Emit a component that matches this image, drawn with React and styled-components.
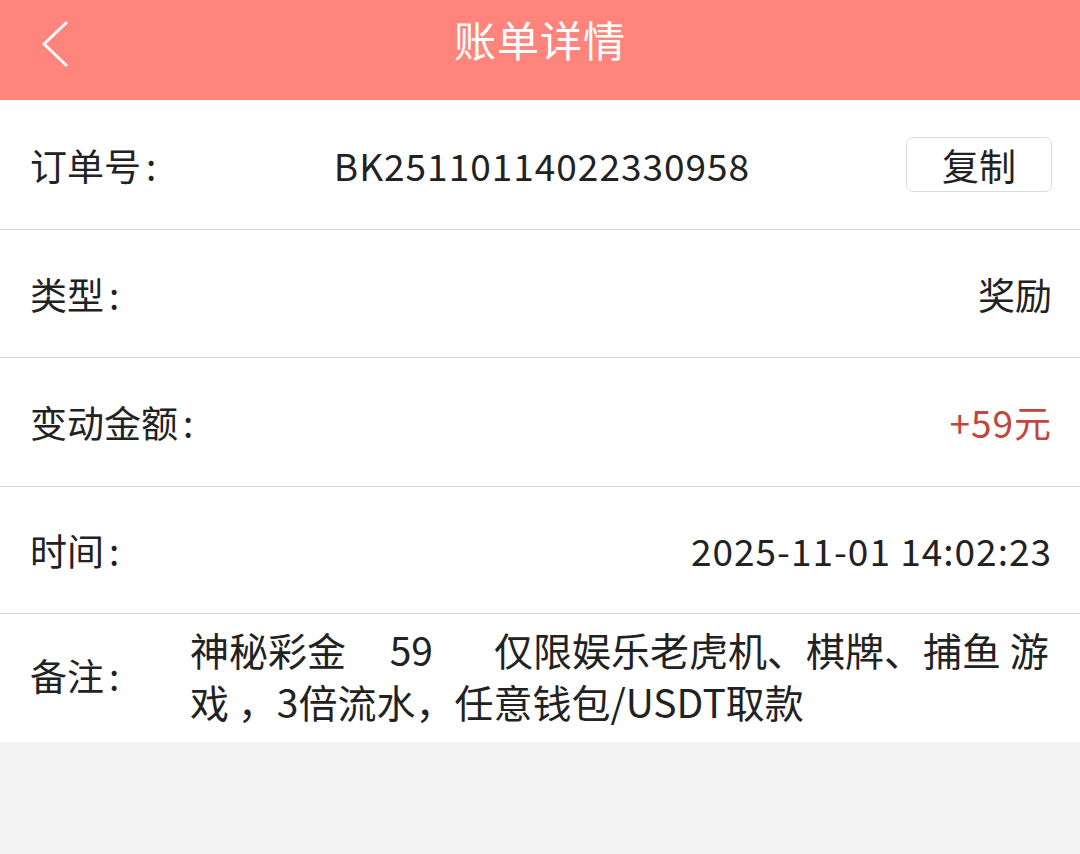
import React from "react";
import styled, { createGlobalStyle } from "styled-components";

const Global = createGlobalStyle`
  html, body { margin: 0; padding: 0; background: #f3f3f3; }
  body { font-family: "Noto Sans CJK SC", "Noto Sans", sans-serif; color: #222; }
`;

const Page = styled.div`
  width: 1080px;
  min-height: 854px;
  background: #f3f3f3;
`;

const Header = styled.header`
  height: 100px;
  background: #ff847c;
  display: flex;
  align-items: center;
  justify-content: center;
  position: relative;
`;

const Back = styled.button`
  position: absolute;
  left: 30px;
  top: 14px;
  width: 50px;
  height: 60px;
  border: 0;
  background: none;
  padding: 0;
  display: flex;
  align-items: center;
  justify-content: center;
`;

const Title = styled.h1`
  margin: 0 0 24px;
  font-size: 42px;
  font-weight: 400;
  color: #fff;
  letter-spacing: 1px;
`;

const List = styled.div`
  background: #fff;
`;

const Row = styled.div`
  display: flex;
  align-items: center;
  box-sizing: border-box;
  height: ${(p) => p.$h || 128}px;
  padding: ${(p) => (p.$last ? "0 30px 6px 30px" : "0 28px 0 30px")};
  border-bottom: ${(p) => (p.$last ? "none" : "1px solid #d6d6d6")};
`;

const Label = styled.div`
  flex: 0 0 160px;
  font-size: 37px;
  color: #222;
  white-space: nowrap;
`;

const Colon = styled.span`
  margin-left: 5px;
`;

const Value = styled.div`
  flex: 1;
  font-size: 37px;
  color: ${(p) => (p.$red ? "#c2473a" : "#222")};
  text-align: ${(p) => (p.$center ? "center" : "right")};
  letter-spacing: ${(p) => (p.$num ? "1px" : "0")};
  white-space: nowrap;
`;

const CopyButton = styled.button`
  flex: 0 0 auto;
  width: 146px;
  height: 55px;
  margin-left: 12px;
  border: 1px solid #dcdcdc;
  border-radius: 7px;
  background: #fff;
  font-family: inherit;
  font-size: 37px;
  color: #222;
  padding: 0;
  display: flex;
  align-items: center;
  justify-content: center;
`;

const Remark = styled.div`
  flex: 1;
  font-size: 39px;
  line-height: 52px;
  color: #222;
  white-space: pre;
`;

export default function App() {
  return (
    <Page>
      <Global />
      <Header>
        <Back aria-label="返回">
          <svg width="32" height="46" viewBox="0 0 32 46" fill="none">
            <path d="M27 2 L5 23 L27 44" stroke="#fff" strokeWidth="3" strokeLinecap="round" strokeLinejoin="round" />
          </svg>
        </Back>
        <Title>账单详情</Title>
      </Header>
      <List>
        <Row $h={130}>
          <Label>订单号<Colon>:</Colon></Label>
          <Value $center $num>BK25110114022330958</Value>
          <CopyButton>复制</CopyButton>
        </Row>
        <Row $h={128}>
          <Label>类型<Colon>:</Colon></Label>
          <Value>奖励</Value>
        </Row>
        <Row $h={129}>
          <Label>变动金额<Colon>:</Colon></Label>
          <Value $red $num>+59元</Value>
        </Row>
        <Row $h={127}>
          <Label>时间<Colon>:</Colon></Label>
          <Value $num>2025-11-01 14:02:23</Value>
        </Row>
        <Row $h={128} $last>
          <Label>备注<Colon>:</Colon></Label>
          <Remark>{"神秘彩金     59       仅限娱乐老虎机、棋牌、捕鱼 游\n戏 ，3倍流水，任意钱包/USDT取款"}</Remark>
        </Row>
      </List>
    </Page>
  );
}
